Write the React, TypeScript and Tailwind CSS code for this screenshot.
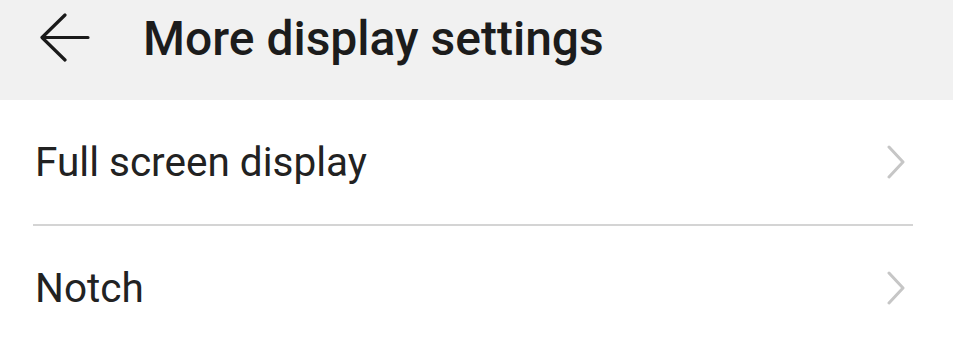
import React from "react";

function Chevron() {
  return (
    <svg width="20" height="34" viewBox="0 0 20 34" fill="none" stroke="#c6c6c6" strokeWidth="3" strokeLinecap="round" strokeLinejoin="round">
      <path d="M3 2 L17 17 L3 32" />
    </svg>
  );
}

function Row({ label, divider }: { label: string; divider?: boolean }) {
  return (
    <div className="flex flex-col">
      <div className="flex h-[124px] items-center justify-between pl-[35px] pr-[47px]">
        <span className="text-[40.5px] leading-none text-[#222222]" style={{ fontFamily: "Roboto, sans-serif" }}>{label}</span>
        <Chevron />
      </div>
      {divider && <div className="ml-[33px] mr-[40px] h-[2px] bg-[#d4d4d4]" />}
    </div>
  );
}

export default function App() {
  return (
    <div className="w-[953px] h-[343px] overflow-hidden bg-white" style={{ fontFamily: "Roboto, sans-serif" }}>
      <div className="flex h-[100px] items-start bg-[#f1f1f1] pl-[40px] pt-[13px]">
        <svg width="50" height="50" viewBox="0 0 50 50" fill="none" stroke="#1a1a1a" strokeWidth="3.2" strokeLinecap="round" strokeLinejoin="round">
          <path d="M48 24.5 H3 M25 2 L2 24.5 L25 47" />
        </svg>
        <span className="ml-[53px] mt-[2px] text-[48px] font-medium leading-none text-[#1c1c1c]">More display settings</span>
      </div>
      <Row label="Full screen display" divider />
      <Row label="Notch" />
    </div>
  );
}
